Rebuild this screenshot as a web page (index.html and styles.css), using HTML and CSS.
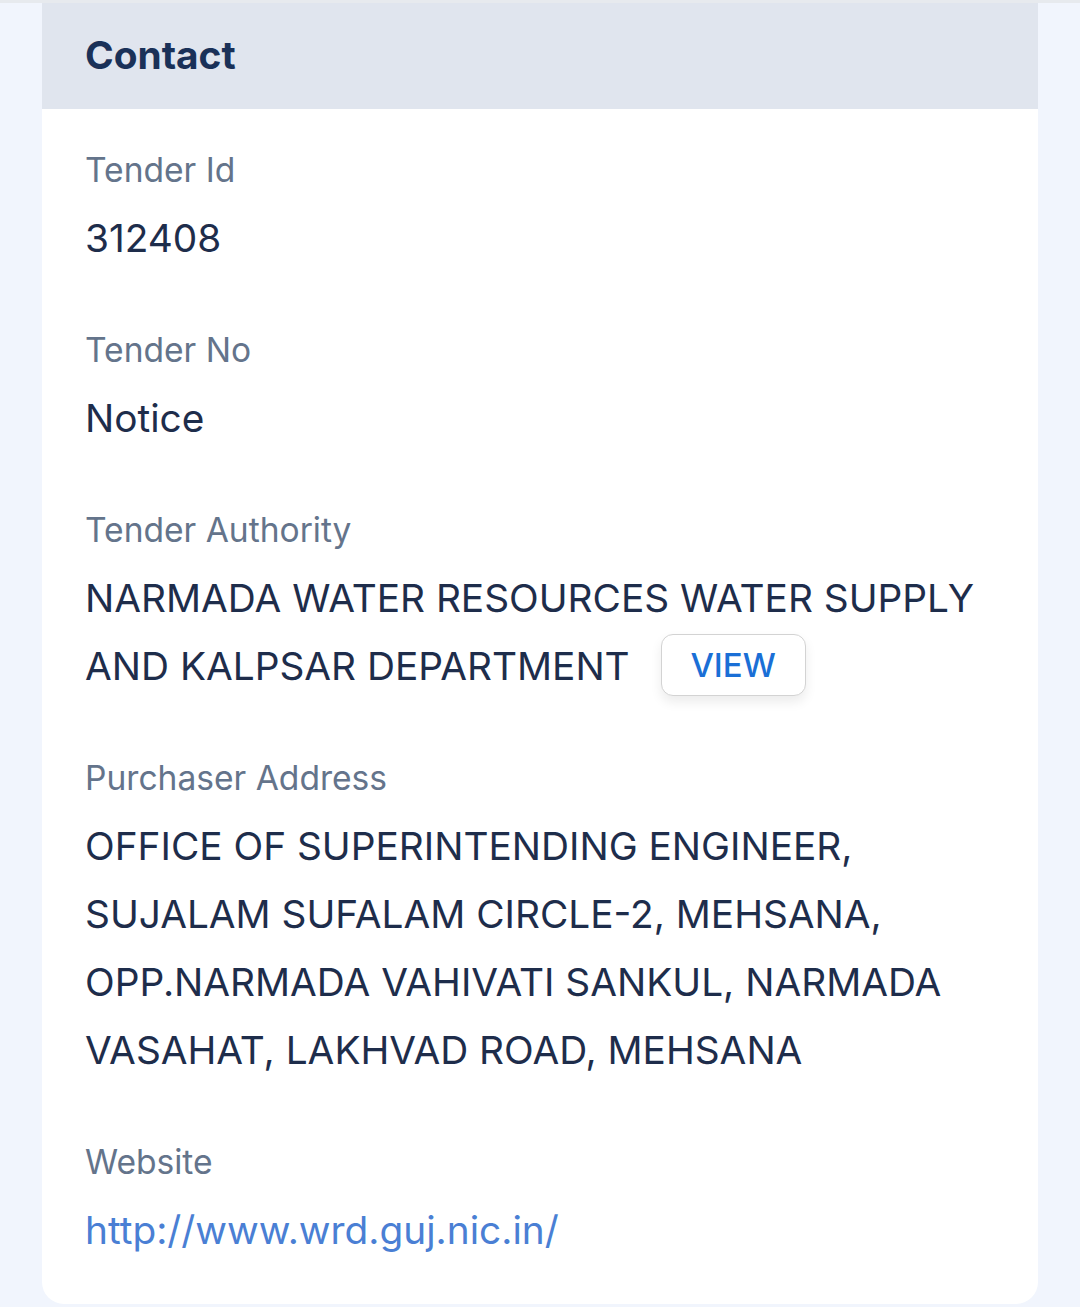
FILE: index.html
```html
<!DOCTYPE html>
<html>
<head>
<meta charset="utf-8">
<link rel="stylesheet" href="styles.css">
</head>
<body>
<div class="topline"></div>
<div class="card">
  <div class="card-header">Contact</div>
  <div class="card-body">
    <div class="field">
      <div class="label">Tender Id</div>
      <div class="value">312408</div>
    </div>
    <div class="field">
      <div class="label">Tender No</div>
      <div class="value">Notice</div>
    </div>
    <div class="field">
      <div class="label">Tender Authority</div>
      <div class="value">NARMADA WATER RESOURCES WATER SUPPLY AND KALPSAR DEPARTMENT <button class="view-btn">VIEW</button></div>
    </div>
    <div class="field">
      <div class="label">Purchaser Address</div>
      <div class="value">OFFICE OF SUPERINTENDING ENGINEER, SUJALAM SUFALAM CIRCLE-2, MEHSANA, OPP.NARMADA VAHIVATI SANKUL, NARMADA VASAHAT, LAKHVAD ROAD, MEHSANA</div>
    </div>
    <div class="field">
      <div class="label">Website</div>
      <div class="value"><a class="link" href="#">http://www.wrd.guj.nic.in/</a></div>
    </div>
  </div>
</div>
</body>
</html>
```
FILE: styles.css
```css
html, body {
  margin: 0;
  padding: 0;
  background: #f1f5fd;
  font-family: Inter, "Noto Sans", sans-serif;
}
.topline {
  height: 3px;
  background: #e7eaee;
}
.card {
  margin: 0 42px;
  background: #ffffff;
  border-radius: 0 0 22px 22px;
  overflow: hidden;
  height: 1301px;
  box-sizing: border-box;
}
.card-header {
  background: #e0e5ee;
  height: 106px;
  box-sizing: border-box;
  display: flex;
  align-items: center;
  padding: 0 43px 4px;
  font-size: 38.8px;
  font-weight: 700;
  color: #1a3158;
}
.card-body {
  padding: 27px 43px 40px;
}
.field + .field {
  margin-top: 44px;
}
.label {
  font-size: 33.6px;
  line-height: 68px;
  color: #64748b;
}
.value {
  font-size: 38.8px;
  line-height: 68px;
  color: #1e2d4b;
}
.link {
  color: #4a7fd4;
  text-decoration: none;
}
.view-btn {
  font-family: Inter, "Noto Sans", sans-serif;
  display: inline-block;
  vertical-align: middle;
  margin-left: 20px;
  width: 145px;
  height: 62px;
  background: #ffffff;
  border: 1.5px solid #d3d3d3;
  border-radius: 12px;
  box-shadow: 0 6px 12px rgba(0, 0, 0, 0.08);
  color: #1a6fd6;
  font-size: 33px;
  font-weight: 500;
  padding: 0;
  position: relative;
  top: -4px;
}
```
